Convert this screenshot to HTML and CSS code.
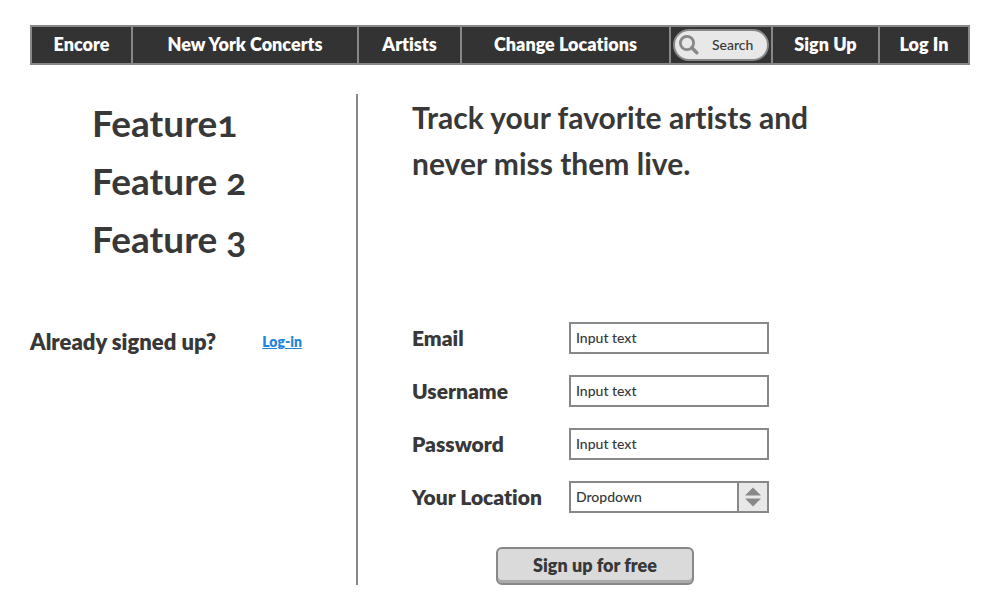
FILE: index.html
```html
<!DOCTYPE html>
<html lang="en">
<head>
<meta charset="utf-8">
<meta name="viewport" content="width=device-width, initial-scale=1">
<title>Encore</title>
<link rel="stylesheet" href="styles.css">
</head>
<body>
<nav class="nav">
  <a class="nav-item" href="#">Encore</a>
  <a class="nav-item" href="#">New York Concerts</a>
  <a class="nav-item" href="#">Artists</a>
  <a class="nav-item" href="#">Change Locations</a>
  <div class="nav-search">
    <label class="search">
      <svg class="search-icon" viewBox="0 0 20 20" aria-hidden="true"><circle cx="8" cy="8" r="6.6" fill="none" stroke="#888" stroke-width="2.8"/><path d="M12.8 12.8L17.8 17.8" stroke="#888" stroke-width="3.4" stroke-linecap="round"/></svg>
      <input class="search-input" type="search" placeholder="Search" aria-label="Search">
    </label>
  </div>
  <a class="nav-item" href="#">Sign Up</a>
  <a class="nav-item" href="#">Log In</a>
</nav>
<main class="main">
  <section class="intro">
    <ul class="features">
      <li>Feature1</li>
      <li>Feature 2</li>
      <li>Feature 3</li>
    </ul>
    <p class="signed">Already signed up? <a class="login" href="#">Log-in</a></p>
  </section>
  <section class="signup">
    <h1 class="headline">Track your favorite artists and never miss them live.</h1>
    <form class="form">
      <label class="label" for="email">Email</label>
      <input class="field" id="email" type="email" placeholder="Input text">
      <label class="label" for="username">Username</label>
      <input class="field" id="username" type="text" placeholder="Input text">
      <label class="label" for="password">Password</label>
      <input class="field" id="password" type="password" placeholder="Input text">
      <label class="label" for="location">Your Location</label>
      <div class="select">
        <select class="field" id="location"><option>Dropdown</option></select>
        <svg class="stepper" viewBox="0 0 28 28" aria-hidden="true"><path d="M6 12.5L14 4.500L22 12.500ZM6 15.500H22L14 23.500Z" fill="#888"/></svg>
      </div>
      <button class="submit" type="submit">Sign up for free</button>
    </form>
  </section>
</main>
</body>
</html>
```
FILE: styles.css
```css
* {
  box-sizing: border-box;
}

body {
  margin: 0;
  padding: 25px 20px 20px 30px;
  background: #fff;
  color: #383838;
  font-family: Lato, "Open Sans", sans-serif;
  font-variant-ligatures: none;
  font-variant-numeric: oldstyle-nums;
}

input,
select,
button {
  color: inherit;
  font-family: inherit;
}

::placeholder {
  color: #383838;
  opacity: 1;
}

.nav {
  display: grid;
  grid-template-columns: 101fr 226fr 103fr 209fr 102fr 107fr 90fr;
  height: 40px;
  border: 2px solid #888;
  border-right: 0;
  background: #333;
}

.nav-item,
.nav-search {
  display: flex;
  align-items: center;
  justify-content: center;
  min-width: 0;
  border-right: 2px solid #888;
}

.nav-item {
  padding-bottom: 2px;
  color: #fff;
  font-size: 18px;
  font-weight: 800;
  text-decoration: none;
  white-space: nowrap;
}

.nav-search {
  padding: 0 2px;
}

.search {
  display: flex;
  align-items: center;
  width: 100%;
  min-width: 0;
  height: 32px;
  padding: 0 8px 0 4px;
  border: 2px solid #888;
  border-radius: 16px;
  background: #e8e8e8;
}

.search-icon {
  flex: none;
  width: 20px;
  height: 20px;
}

.search-input {
  flex: 1;
  width: 0;
  min-width: 0;
  padding: 0 0 2px 13px;
  border: 0;
  background: none;
  font-size: 14px;
  font-weight: 500;
}

.search-input::-webkit-search-cancel-button {
  display: none;
}

.main {
  display: grid;
  grid-template-columns: 328px 1fr;
  margin-top: 29px;
}

.intro {
  border-right: 2px solid #888;
}

.features {
  margin: 0;
  padding: 0 0 0 62px;
  list-style: none;
  font-size: 37px;
  font-weight: 700;
  line-height: 58px;
}

.signed {
  display: flex;
  align-items: center;
  gap: 46px;
  margin: 61px 0 0;
  font-size: 22px;
  font-weight: 800;
  line-height: 26px;
}

.login {
  color: #1e86dc;
  font-size: 14px;
}

.signup {
  padding-left: 54px;
}

.headline {
  max-width: 440px;
  margin: 0;
  font-size: 30px;
  font-weight: 700;
  line-height: 46px;
}

.form {
  display: grid;
  grid-template-columns: 157px 200px;
  row-gap: 21px;
  align-items: center;
  margin-top: 136px;
}

.label {
  padding-bottom: 2px;
  font-size: 21px;
  font-weight: 800;
}

.field {
  display: block;
  width: 100%;
  height: 32px;
  padding: 0 5px 2px;
  border: 2px solid #888;
  border-radius: 0;
  background: #fff;
  font-size: 14px;
  font-weight: 500;
  appearance: none;
}

.select {
  position: relative;
}

.stepper {
  position: absolute;
  top: 0;
  right: 0;
  width: 32px;
  height: 32px;
  border: 2px solid #888;
  background: #e8e8e8;
  pointer-events: none;
}

.submit {
  grid-column: 1 / -1;
  width: 198px;
  height: 38px;
  margin: 13px 0 0 84px;
  padding: 0 0 2px;
  border: 2px solid #888;
  border-radius: 6px;
  background: #dadada;
  box-shadow: inset 0 -3px #aaa;
  font-size: 18px;
  font-weight: 800;
}
```
